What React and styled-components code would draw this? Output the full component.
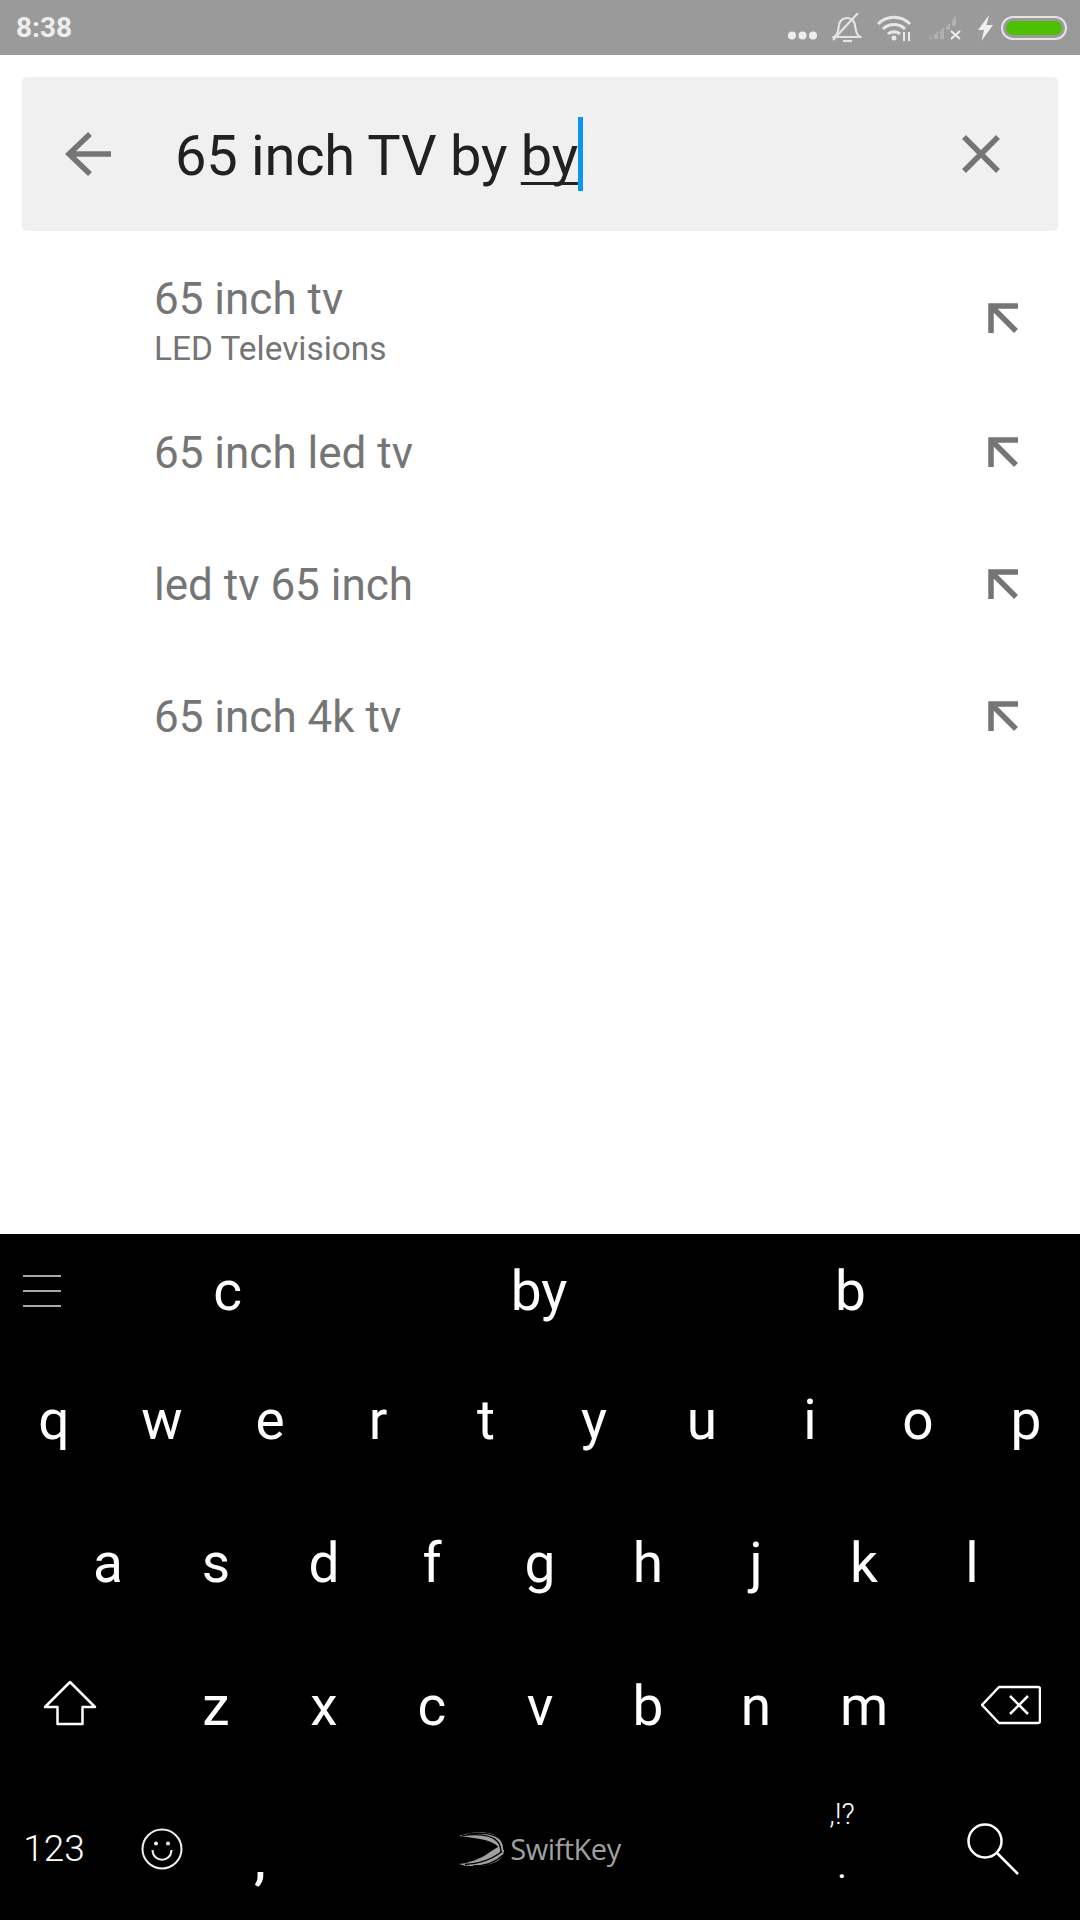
import React from "react";
import styled, { createGlobalStyle } from "styled-components";

const GlobalStyle = createGlobalStyle`
  html, body {
    margin: 0;
    padding: 0;
    background: #fff;
  }
  * {
    box-sizing: border-box;
  }
`;

const Screen = styled.div`
  width: 1080px;
  height: 1920px;
  display: flex;
  flex-direction: column;
  font-family: Roboto, "Liberation Sans", sans-serif;
  overflow: hidden;
`;

const StatusBar = styled.div`
  height: 55px;
  flex: none;
  background: #9a9a9a;
  display: flex;
  align-items: center;
  padding: 0 13px 0 16px;
`;

const Clock = styled.span`
  font-size: 28px;
  font-weight: 700;
  color: #eeeeee;
  margin-right: auto;
`;

const StatusIcon = styled.svg`
  display: block;
  flex: none;
  margin-left: ${(p) => p.$gap}px;
`;

const Dots = styled(StatusIcon)`
  margin-top: 16px;
`;

const Battery = styled.div`
  width: 66px;
  height: 24px;
  margin-left: 8px;
  padding: 3px;
  border: 2px solid #e4e4e4;
  border-radius: 12px;
`;

const BatteryFill = styled.div`
  height: 100%;
  background: #4cc000;
  border-radius: 8px;
`;

const Main = styled.div`
  flex: 1;
  background: #fff;
  padding-top: 22px;
`;

const SearchBox = styled.div`
  height: 154px;
  margin: 0 22px;
  background: #f0f0f0;
  border-radius: 5px;
  display: flex;
  align-items: center;
  padding: 0 58px 0 43px;
`;

const SearchText = styled.div`
  flex: 1;
  margin-left: 64px;
  padding-top: 4px;
  display: flex;
  align-items: center;
  font-size: 56px;
  letter-spacing: -0.25px;
  color: #212121;
  white-space: pre;
`;

const Composing = styled.span`
  text-decoration: underline;
  text-decoration-thickness: 3px;
  text-decoration-skip-ink: none;
  text-underline-offset: 7px;
`;

const Cursor = styled.span`
  width: 5px;
  height: 74px;
  margin-top: -4px;
  background: #0a96f0;
`;

const SuggestionList = styled.div`
  display: flex;
  flex-direction: column;
  gap: 40px;
  padding: 39px 62px 0 154px;
`;

const SuggestionRow = styled.div`
  height: ${(p) => (p.$tall ? 96 : 92)}px;
  display: flex;
  align-items: center;
  justify-content: space-between;
`;

const SuggestionBody = styled.div`
  display: flex;
  flex-direction: column;
  margin-top: 7px;
`;

const SuggestionTitle = styled.span`
  font-size: 44px;
  line-height: 52px;
  padding-top: 2px;
  color: #757575;
`;

const SuggestionSub = styled.span`
  font-size: 33.4px;
  line-height: 48px;
  color: #757575;
`;

const Keyboard = styled.div`
  height: 686px;
  flex: none;
  background: #000;
  color: #fff;
  display: flex;
  flex-direction: column;
`;

const PredictionBar = styled.div`
  height: 114px;
  display: flex;
  align-items: center;
  padding: 0 74px 0 23px;
`;

const MenuButton = styled.div`
  width: 49px;
  display: flex;
  flex-direction: column;
  gap: 13px;
`;

const MenuLine = styled.span`
  width: 38px;
  height: 2px;
  background: #a8a8a8;
`;

const Prediction = styled.span`
  flex: 1;
  text-align: center;
  font-size: 55px;
`;

const KeyRow = styled.div`
  height: 143px;
  display: flex;
  align-items: center;
  padding: 0 ${(p) => p.$inset || 0}px;
`;

const Key = styled.div`
  width: 108px;
  text-align: center;
  font-size: 55px;
`;

const ShiftKey = styled.div`
  width: 162px;
  padding-right: 22px;
  display: flex;
  justify-content: center;
  margin-top: -6px;
`;

const BackspaceKey = styled.div`
  width: 162px;
  padding-left: 24px;
  display: flex;
  justify-content: center;
  margin-top: -2px;
`;

const BottomKey = styled.div`
  width: ${(p) => p.$w}px;
  display: flex;
  justify-content: center;
`;

const NumbersLabel = styled.span`
  font-size: 37px;
  font-weight: 300;
`;

const Comma = styled.span`
  font-size: 54px;
  font-weight: 500;
  margin: 22px 20px 0 0;
`;

const Logo = styled.div`
  display: flex;
  align-items: center;
  gap: 5px;
`;

const LogoText = styled.span`
  font-family: "Open Sans", sans-serif;
  font-size: 29px;
  font-weight: 400;
  letter-spacing: -0.5px;
  color: #a0a0a0;
`;

const PunctKey = styled.div`
  width: 162px;
  padding-left: 10px;
  margin-top: -14px;
  display: flex;
  flex-direction: column;
  align-items: center;
  font-weight: 300;
  line-height: 1;
`;

const PunctTop = styled.span`
  font-size: 29px;
`;

const PunctDot = styled.span`
  font-size: 30px;
  font-weight: 500;
  margin-top: 24px;
`;

const SearchKey = styled.div`
  width: 162px;
  padding-right: 12px;
  display: flex;
  justify-content: center;
`;

const BackArrow = () => (
  <svg width="46" height="44" viewBox="0 0 46 44" fill="none" stroke="#757575" strokeWidth="5.5">
    <path d="M46 22H4M25 2 4 22l21 20" />
  </svg>
);

const ClearIcon = () => (
  <svg width="38" height="38" viewBox="0 0 38 38" fill="none" stroke="#757575" strokeWidth="5.5">
    <path d="M2 2l34 34M36 2 2 36" />
  </svg>
);

const FillArrow = () => (
  <svg width="30" height="30" viewBox="0 0 30 30" fill="none" stroke="#757575" strokeWidth="5.5">
    <path d="M30 3H3v27M3 3l25 25" />
  </svg>
);

const ShiftIcon = () => (
  <svg width="54" height="46" viewBox="0 0 54 46" fill="none" stroke="#fff" strokeWidth="2.5" strokeLinejoin="round">
    <path d="M27 2 2 27h12.500v17h25V27H52z" />
  </svg>
);

const BackspaceIcon = () => (
  <svg width="60" height="40" viewBox="0 0 60 40" fill="none" stroke="#fff" strokeWidth="2.5" strokeLinejoin="round">
    <path d="M18 2h39a2 2 0 0 1 2 2v32a2 2 0 0 1-2 2H18L1 20z" />
    <path d="M29 11l18 18M47 11 29 29" />
  </svg>
);

const EmojiIcon = () => (
  <svg width="42" height="42" viewBox="0 0 42 42" fill="none" stroke="#f0f0f0" strokeWidth="2">
    <circle cx="21" cy="21" r="19.500" />
    <circle cx="15" cy="15.500" r="2" fill="#f0f0f0" stroke="none" />
    <circle cx="27" cy="15.500" r="2" fill="#f0f0f0" stroke="none" />
    <path d="M11.500 22c.5 13 18.500 13 19 0" />
  </svg>
);

const SearchIcon = () => (
  <svg width="52" height="52" viewBox="0 0 52 52" fill="none" stroke="#fff" strokeWidth="2.5">
    <circle cx="18" cy="18" r="16.500" />
    <path d="M30 30l21 21" />
  </svg>
);

const SwooshMark = () => (
  <svg width="46" height="34" viewBox="0 0 46 34">
    <path d="M0 4C12-1 34-2 41 7c5 6 5 12 2 18C43 16 37 11 26 8 18 6 8 5 0 4z" fill="#a0a0a0" />
    <path d="M0 32C10 31 22 27 31 20c5-3 9-6 12-7 2 6 1 11-2 14-6 6-22 8-30 7-4 0-8-1-11-2z" fill="#a0a0a0" />
    <g fill="none" stroke="#000" strokeWidth="1.300">
      <path d="M3 3.500C15 2 31 2 38 9c3 3 4 7 4 12" />
      <path d="M8 2.500C20 0 36 1 42 8c2 3 3 6 3 10" />
      <path d="M6 32.500c12-1 24-3 37-13" />
      <path d="M14 34c10 0 22-3 30-11" />
    </g>
  </svg>
);

const suggestions = ["65 inch led tv", "led tv 65 inch", "65 inch 4k tv"];
const topKeys = ["q", "w", "e", "r", "t", "y", "u", "i", "o", "p"];
const homeKeys = ["a", "s", "d", "f", "g", "h", "j", "k", "l"];
const lowKeys = ["z", "x", "c", "v", "b", "n", "m"];

const App = () => {
  return (
    <Screen>
      <GlobalStyle />
      <StatusBar>
        <Clock>8:38</Clock>
        <Dots $gap={0} width="29" height="9" viewBox="0 0 29 9" fill="#eeeeee">
          <circle cx="4" cy="4.500" r="4" />
          <circle cx="14.500" cy="4.500" r="4" />
          <circle cx="25" cy="4.500" r="4" />
        </Dots>
        <StatusIcon $gap={15} width="30" height="30" viewBox="0 0 30 30" fill="none" stroke="#e4e4e4" strokeWidth="2.200">
          <path d="M2 24c3-2 4-4 4.500-9C7 9 10 5 15 5s8 4 8.500 10c.5 5 1.500 7 4.500 9z" />
          <path d="M11 28h9" />
          <path d="M1 27 26 0" />
        </StatusIcon>
        <StatusIcon $gap={15} width="35" height="26" viewBox="0 0 35 26" fill="none" stroke="#e8e8e8" strokeWidth="3">
          <path d="M1 9c9-9 23-9 32 0" />
          <path d="M6 14c6-6 16-6 22 0" />
          <path d="M11 19c3-3 9-3 12 0" />
          <circle cx="17" cy="23" r="2.500" fill="#e8e8e8" stroke="none" />
          <path d="M27 17v9M32 17v9" strokeWidth="2" />
        </StatusIcon>
        <StatusIcon $gap={16} width="34" height="24" viewBox="0 0 34 24">
          <path d="M0 23h4v-3zM6 23h4v-8l-4 4zM12 23h4V11l-4 4zM18 14h4V7l-4 4zM24 10h4V0l-4 4z" fill="#b0b0b0" />
          <path d="M23 15l9 8M32 15l-9 8" stroke="#eeeeee" strokeWidth="2" />
        </StatusIcon>
        <StatusIcon $gap={16} width="15" height="26" viewBox="0 0 15 26" fill="#eeeeee">
          <path d="M11 0 0 15h6L3.500 26 15 10H8.500z" />
        </StatusIcon>
        <Battery>
          <BatteryFill />
        </Battery>
      </StatusBar>

      <Main>
        <SearchBox>
          <BackArrow />
          <SearchText>
            65 inch TV by <Composing>by</Composing>
            <Cursor />
          </SearchText>
          <ClearIcon />
        </SearchBox>
        <SuggestionList>
          <SuggestionRow $tall>
            <SuggestionBody>
              <SuggestionTitle>65 inch tv</SuggestionTitle>
              <SuggestionSub>LED Televisions</SuggestionSub>
            </SuggestionBody>
            <FillArrow />
          </SuggestionRow>
          {suggestions.map((s) => (
            <SuggestionRow key={s}>
              <SuggestionTitle>{s}</SuggestionTitle>
              <FillArrow />
            </SuggestionRow>
          ))}
        </SuggestionList>
      </Main>

      <Keyboard>
        <PredictionBar>
          <MenuButton>
            <MenuLine />
            <MenuLine />
            <MenuLine />
          </MenuButton>
          <Prediction>c</Prediction>
          <Prediction>by</Prediction>
          <Prediction>b</Prediction>
        </PredictionBar>
        <KeyRow>
          {topKeys.map((k) => (
            <Key key={k}>{k}</Key>
          ))}
        </KeyRow>
        <KeyRow $inset={54}>
          {homeKeys.map((k) => (
            <Key key={k}>{k}</Key>
          ))}
        </KeyRow>
        <KeyRow>
          <ShiftKey>
            <ShiftIcon />
          </ShiftKey>
          {lowKeys.map((k) => (
            <Key key={k}>{k}</Key>
          ))}
          <BackspaceKey>
            <BackspaceIcon />
          </BackspaceKey>
        </KeyRow>
        <KeyRow>
          <BottomKey $w={108}>
            <NumbersLabel>123</NumbersLabel>
          </BottomKey>
          <BottomKey $w={108}>
            <EmojiIcon />
          </BottomKey>
          <BottomKey $w={108}>
            <Comma>,</Comma>
          </BottomKey>
          <BottomKey $w={432}>
            <Logo>
              <SwooshMark />
              <LogoText>SwiftKey</LogoText>
            </Logo>
          </BottomKey>
          <PunctKey>
            <PunctTop>,!?</PunctTop>
            <PunctDot>.</PunctDot>
          </PunctKey>
          <SearchKey>
            <SearchIcon />
          </SearchKey>
        </KeyRow>
      </Keyboard>
    </Screen>
  );
};

export default App;
